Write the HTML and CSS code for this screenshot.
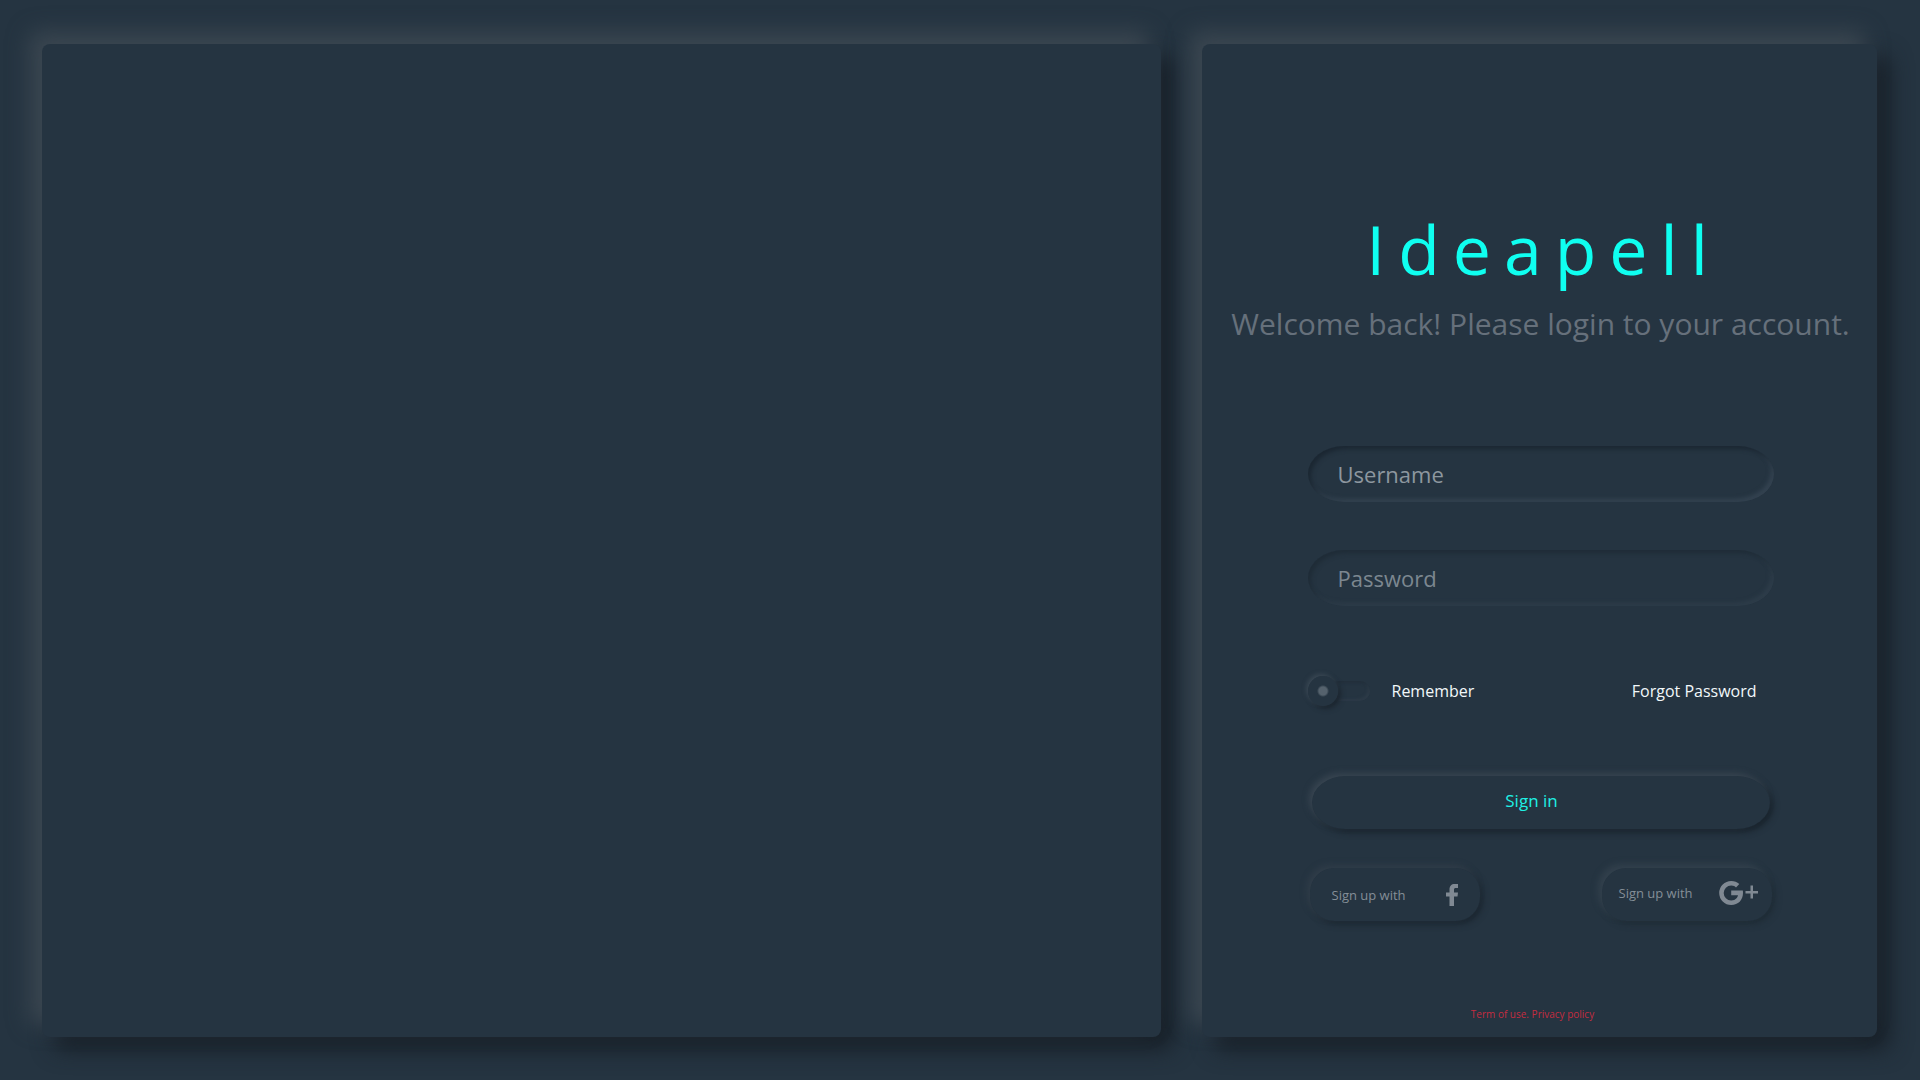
FILE: index.html
```html
<!DOCTYPE html>
<html lang="en">
<head>
<meta charset="utf-8">
<meta name="viewport" content="width=device-width, initial-scale=1">
<title>Ideapell</title>
<link rel="stylesheet" href="styles.css">
</head>
<body>
<main class="page">
  <section class="panel showcase"></section>
  <section class="panel login">
    <h1 class="brand">Ideapell</h1>
    <p class="welcome">Welcome back! Please login to your account.</p>
    <form class="form">
      <input class="field" type="text" placeholder="Username" aria-label="Username">
      <input class="field field-soft" type="password" placeholder="Password" aria-label="Password">
      <div class="options">
        <label class="remember"><input class="switch" type="checkbox">Remember</label>
        <a class="forgot" href="#">Forgot Password</a>
      </div>
      <button class="signin" type="submit">Sign in</button>
      <div class="social">
        <button class="signup" type="button">
          <span>Sign up with</span>
          <svg width="12" height="22" viewBox="0 0 12 22" aria-label="Facebook"><path d="M3.500 22V12.500H0v-4h3.500V5.500C3.500 2 5.500 0 8.500 0H12v4H9.700C8.600 4 8 4.600 8 5.600v2.900h4l-.5 4H8V22z"/></svg>
        </button>
        <button class="signup signup-google" type="button">
          <span>Sign up with</span>
          <svg width="40" height="24" viewBox="0 0 40 24" aria-label="Google Plus"><path d="M12.200 9.600h11.600c.2.800.2 1.600.2 2.400C24 19 19.200 24 12.200 24a12 12 0 1 1 0-24c3.200 0 6 1.200 8.100 3.100L17 6.400c-.9-.9-2.500-1.900-4.800-1.900a7.500 7.500 0 0 0 0 15c4.700 0 6.500-3.400 6.800-5.200h-6.800z"/><path d="M31.500 4.500h2.500v5.500H39v2.500h-5v5h-2.500v-5H26.500v-2.500h5z"/></svg>
        </button>
      </div>
    </form>
    <footer class="legal"><a href="#">Term of use.</a> <a href="#">Privacy policy</a></footer>
  </section>
</main>
</body>
</html>
```
FILE: styles.css
```css
* {
  box-sizing: border-box;
}

body {
  margin: 0;
  background: #253441;
  color: #f2f8fa;
  font-family: "Open Sans", "Noto Sans", sans-serif;
}

a {
  color: inherit;
  text-decoration: none;
}

button,
input {
  margin: 0;
  border: 0;
  background: transparent;
  color: inherit;
  font-family: inherit;
}

.page {
  display: grid;
  grid-template-columns: 1119fr 675fr;
  gap: 41px;
  min-height: 100vh;
  padding: 44px 43px 43px 42px;
}

.panel {
  border-radius: 8px;
  background: #253441;
  box-shadow: -12px -12px 22px #3b4751, 12px 12px 22px #171f27;
}

.login {
  display: flex;
  flex-direction: column;
  align-items: center;
  padding: 165px 15px 15px 17px;
}

.brand {
  margin: 0;
  padding-left: 6px;
  color: #0ffff0;
  font-size: 68px;
  font-weight: 400;
  line-height: 80px;
  letter-spacing: 13px;
}

.welcome {
  margin: 15px 0 102px;
  color: #66707b;
  font-size: 30px;
  line-height: 40px;
  text-align: center;
}

.form {
  display: flex;
  flex-direction: column;
  width: 100%;
  max-width: 466px;
}

.field {
  width: 100%;
  height: 56px;
  margin-bottom: 48px;
  padding: 0 30px;
  border-radius: 36px / 28px;
  outline: 0;
  box-shadow: inset 3px 3px 4px #1b2732, inset -3px -3px 4px #344351;
  font-size: 22px;
}

.field::placeholder {
  color: #8d979f;
  opacity: 1;
}

.field-soft {
  margin-bottom: 70px;
  box-shadow: inset 3px 3px 4px #1f2c37, inset -3px -3px 4px #2e3d4a;
}

.field-soft::placeholder {
  color: #7c8790;
}

.options {
  display: flex;
  align-items: center;
  justify-content: space-between;
  height: 30px;
  padding-right: 17px;
  font-size: 16px;
}

.remember {
  display: flex;
  align-items: center;
  gap: 22px;
}

.switch {
  display: flex;
  align-items: center;
  width: 62px;
  height: 30px;
  appearance: none;
}

.switch::before {
  content: "";
  width: 30px;
  height: 30px;
  border-radius: 50%;
  background: radial-gradient(circle, #55626d 4px, #253441 6px);
  box-shadow: -2px -2px 4px #394753, 3px 3px 5px #1c2630;
  z-index: 1;
}

.switch::after {
  content: "";
  width: 42px;
  height: 20px;
  margin-left: -10px;
  border-radius: 10px;
  box-shadow: inset 2px 2px 3px #222f3b, inset -2px -2px 3px #2d3b48;
}

.switch:checked {
  flex-direction: row-reverse;
}

.signin {
  height: 53px;
  margin: 70px 4px 39px;
  padding: 0 18px 4px 0;
  border-radius: 34px / 27px;
  box-shadow: -3px -3px 6px #384551, 3px 3px 6px #18222b;
  color: #1ff0e4;
  font-size: 17px;
}

.social {
  display: flex;
  justify-content: space-between;
  padding: 0 2px;
}

.signup {
  display: flex;
  align-items: center;
  justify-content: space-between;
  width: 170px;
  height: 53px;
  padding: 0 22px;
  border-radius: 24px;
  box-shadow: -3px -3px 6px #303d49, 3px 3px 6px #1b2630;
  color: #848e97;
  font-size: 13px;
}

.signup svg {
  fill: #808993;
}

.signup-google {
  padding: 0 13px 3px 17px;
  box-shadow: -4px -4px 6px #32404c, 3px 3px 6px #1f2c36;
}

.legal {
  margin-top: auto;
  padding-right: 16px;
  color: #c42c40;
  font-size: 10px;
  line-height: 16px;
}
```
